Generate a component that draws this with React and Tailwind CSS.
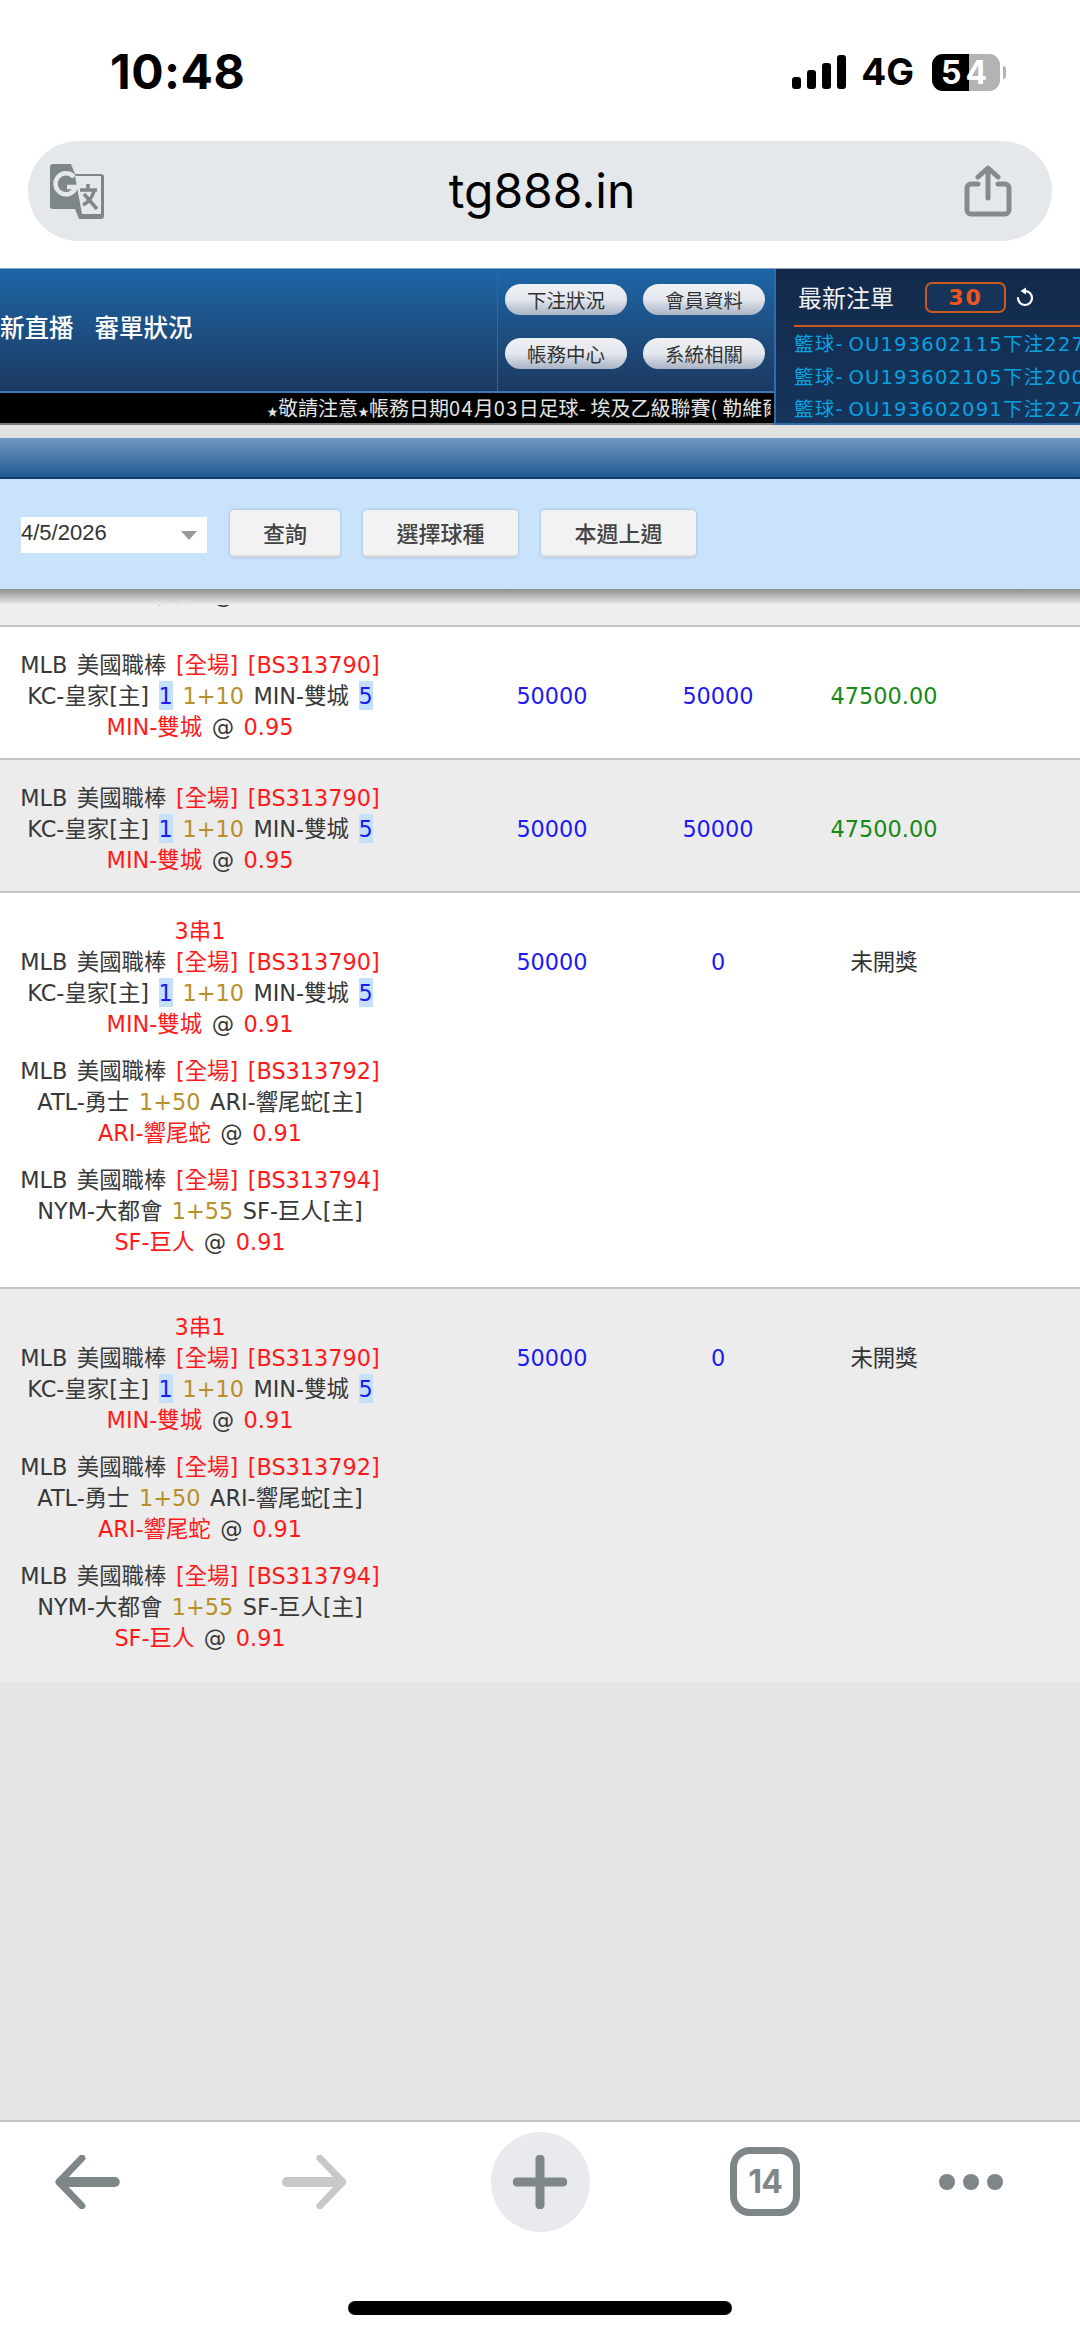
const bodyFont = "font-['DejaVu_Sans','Noto_Sans_CJK_TC',sans-serif]";

const leg1 = (odds) => ({
  league: "MLB 美國職棒",
  id: "[BS313790]",
  home: "KC-皇家[主]",
  homeScore: "1",
  hdp: "1+10",
  away: "MIN-雙城",
  awayScore: "5",
  pick: "MIN-雙城",
  odds,
});

const leg2 = {
  league: "MLB 美國職棒",
  id: "[BS313792]",
  home: "ATL-勇士",
  hdp: "1+50",
  away: "ARI-響尾蛇[主]",
  pick: "ARI-響尾蛇",
  odds: "0.91",
};

const leg3 = {
  league: "MLB 美國職棒",
  id: "[BS313794]",
  home: "NYM-大都會",
  hdp: "1+55",
  away: "SF-巨人[主]",
  pick: "SF-巨人",
  odds: "0.91",
};

const rows = [
  { legs: [leg1("0.95")], stake: "50000", valid: "50000", result: "47500.00", won: true, style: "h-[133px] border-b-2 border-[#c4c2c2] bg-white" },
  { legs: [leg1("0.95")], stake: "50000", valid: "50000", result: "47500.00", won: true, style: "h-[133px] border-b-2 border-[#c4c2c2] bg-[#ececed]" },
  { title: "3串1", legs: [leg1("0.91"), leg2, leg3], stake: "50000", valid: "0", result: "未開獎", style: "h-[396px] border-b-2 border-[#c4c2c2] bg-white" },
  { title: "3串1", legs: [leg1("0.91"), leg2, leg3], stake: "50000", valid: "0", result: "未開獎", style: "h-[393px] bg-[#ececed]" },
];

const latestBets = ["193602115下注227", "193602105下注200", "193602091下注227"];

const Score = ({ value }) => (
  <span className="inline-block h-[29px] bg-[#c5e0fb] text-[#1c1cf0]">{value}</span>
);

const Leg = ({ leg }) => (
  <div>
    <div>
      {leg.league} <span className="text-[#ff1a1a]">[全場] {leg.id}</span>
    </div>
    <div>
      {leg.home} {leg.homeScore && <><Score value={leg.homeScore} />{" "}</>}
      <span className="text-[#b8902a]">{leg.hdp}</span> {leg.away}
      {leg.awayScore && <>{" "}<Score value={leg.awayScore} /></>}
    </div>
    <div>
      <span className="text-[#ff1a1a]">{leg.pick}</span> @ <span className="text-[#ff1a1a]">{leg.odds}</span>
    </div>
  </div>
);

const BetRow = ({ row }) => (
  <div className={`flex shrink-0 ${row.style} text-[22.4px] leading-[31px] [word-spacing:2.4px]`}>
    <div className="flex w-[400px] shrink-0 flex-col gap-[16px] pt-[23px] text-center text-[#383838]">
      {row.title ? (
        <>
          <div>
            <div className="text-[#ff1a1a]">{row.title}</div>
            <Leg leg={row.legs[0]} />
          </div>
          {row.legs.slice(1).map((leg) => (
            <Leg key={leg.id} leg={leg} />
          ))}
        </>
      ) : (
        <Leg leg={row.legs[0]} />
      )}
    </div>
    <div className="ml-[69px] flex pt-[54px] text-center">
      <div className="w-[166px] text-[#1c1cf0]">{row.stake}</div>
      <div className="w-[166px] text-[#1c1cf0]">{row.valid}</div>
      <div className={`w-[166px] ${row.won ? "text-[#178a17]" : "text-[#333]"}`}>{row.result}</div>
    </div>
  </div>
);

const StatusBar = () => (
  <div className="flex h-[141px] shrink-0 items-start justify-between bg-white pl-[110px] pr-[74px] pt-[50px] font-['Inter',sans-serif] text-black">
    <div className="text-[48px] font-bold leading-[44px] tracking-[0.5px]">10:48</div>
    <div className="flex items-center pt-[3px]">
      <svg width="54" height="34" viewBox="0 0 54 34" fill="#000">
        <rect x="0" y="22" width="9" height="12" rx="3" />
        <rect x="15" y="15" width="9" height="19" rx="3" />
        <rect x="30" y="8" width="9" height="26" rx="3" />
        <rect x="45" y="0" width="9" height="34" rx="3" />
      </svg>
      <div className="ml-[15px] text-[37px] font-bold leading-[38px]">4G</div>
      <div className="relative ml-[18px] flex h-[37px] w-[68px] overflow-hidden rounded-[11px] bg-[#b3b3b3]">
        <div className="h-full w-[37px] bg-black" />
        <div className="absolute inset-0 text-center text-[32px] font-bold leading-[37px] tracking-[4px] text-white">54</div>
      </div>
      <div className="ml-[3px] h-[13px] w-[3px] rounded-r-full bg-[#b3b3b3]" />
    </div>
  </div>
);

const TranslateIcon = () => (
  <svg width="55" height="55" viewBox="0 0 55 55">
    <path d="M3 0h18l4 10h26a3 3 0 0 1 3 3v39a3 3 0 0 1-3 3H29l-4-10H3a3 3 0 0 1-3-3V3a3 3 0 0 1 3-3z" fill="#7f8689" />
    <path d="M25 12h26v38H32z" fill="#e5e8eb" />
    <path d="M30 26h17M38 20v6M44 27c-2 7-7 12-11 14M34 30l13 15" stroke="#7f8689" strokeWidth="3.5" fill="none" />
    <path d="M24 13a10.5 10.5 0 1 0 2 10H17" stroke="#e5e8eb" strokeWidth="4.5" fill="none" />
  </svg>
);

const ShareIcon = () => (
  <svg width="48" height="52" viewBox="0 0 48 52" fill="none" stroke="#848a8f" strokeWidth="5" strokeLinecap="round" strokeLinejoin="round">
    <path d="M14 19H7a4 4 0 0 0-4 4v22a4 4 0 0 0 4 4h34a4 4 0 0 0 4-4V23a4 4 0 0 0-4-4h-7" />
    <path d="M24 33V4M14 12l10-9 10 9" />
  </svg>
);

const UrlBar = () => (
  <div className="shrink-0 bg-white px-[28px] pb-[27px]">
    <div className="flex h-[100px] items-center justify-between rounded-[50px] bg-[#e5e8eb] pl-[22px] pr-[40px]">
      <TranslateIcon />
      <div className="ml-[15px] font-['Inter',sans-serif] text-[48px] leading-[56px] text-black">tg888.in</div>
      <ShareIcon />
    </div>
  </div>
);

const PillButton = ({ children }) => (
  <div className="flex h-[31px] w-[122px] items-center justify-center rounded-full bg-gradient-to-b from-[#eef1f5] via-[#e4e8ee] to-[#a9b3c4] text-[19.5px] text-[#333]">
    {children}
  </div>
);

const RefreshIcon = () => (
  <svg width="18" height="20" viewBox="0 0 18 20" fill="none" className="ml-[10px]">
    <path d="M2 11a7 7 0 1 0 7-7" stroke="#fff" strokeWidth="2.2" strokeLinecap="round" />
    <path d="M4.5 4 10 .5v7z" fill="#fff" />
  </svg>
);

const TopPanel = () => (
  <div className="flex h-[170px] shrink-0 border-t border-[#8aa6c2] bg-[#e1e1e1] pb-[13px] font-['Noto_Sans_CJK_TC',sans-serif]">
    <div className="flex w-[774px] shrink-0 flex-col">
      <div className="flex h-[125px] border-b-2 border-[#3f78b4] bg-gradient-to-b from-[#1c66a6] to-[#1b3a62]">
        <div className="flex w-[497px] shrink-0 items-center whitespace-nowrap pb-[6px] text-[24.5px] font-medium text-white">
          <span>新直播</span>
          <span className="ml-[21px]">審單狀況</span>
        </div>
        <div className="grid grid-cols-[122px_122px] content-start gap-x-[16px] gap-y-[23px] border-l border-[#33689c] pl-[7px] pt-[15px]">
          <PillButton>下注狀況</PillButton>
          <PillButton>會員資料</PillButton>
          <PillButton>帳務中心</PillButton>
          <PillButton>系統相關</PillButton>
        </div>
      </div>
      <div className="h-[32px] border-b-2 border-[#777] bg-black pl-[267px] pr-[3px] text-[20px] leading-[29px] text-[#e4e4e4]">
        <div className="w-[504px] overflow-hidden whitespace-nowrap">
          <span className="text-[11px]">★</span>敬請注意<span className="text-[11px]">★</span>帳務日期<span className="tracking-[1.3px]">04</span>月<span className="tracking-[1.3px]">03</span>日足球<span className="tracking-[5px]">-</span>埃及乙級聯賽<span className="tracking-[5px]">(</span>勒維爾
        </div>
      </div>
    </div>
    <div className="h-[156px] flex-1 overflow-hidden border-b-2 border-l-2 border-[#2f6cab] bg-gradient-to-b from-[#12294a] to-[#16355c]">
      <div className="flex h-[56px] items-center pl-[22px]">
        <div className="text-[24px] leading-[30px] text-[#f2f2f2]">最新注單</div>
        <div className="ml-[31px] flex h-[31px] w-[81px] items-center justify-center rounded-[7px] border-2 border-[#c9591d] bg-[#16345a] font-['DejaVu_Sans',sans-serif] text-[22px] font-bold tracking-[2px] text-[#f0561c]">
          30
        </div>
        <RefreshIcon />
      </div>
      <div className="ml-[18px] border-t-2 border-[#c9591d] pt-[2px] font-['DejaVu_Sans','Noto_Sans_CJK_TC',sans-serif] text-[19.5px] leading-[32.5px] tracking-[1.2px] text-[#06a3e0]">
        {latestBets.map((bet) => (
          <div key={bet} className="whitespace-nowrap">
            籃球<span className="tracking-[6px]">-</span>OU{bet}
          </div>
        ))}
      </div>
    </div>
  </div>
);

const ActionButton = ({ width, children }) => (
  <div className={`flex h-[47px] ${width} items-center justify-center rounded-[4px] border-b-2 border-[#dcdcdc] bg-[#f2f2f2] font-['Noto_Sans_CJK_TC',sans-serif] text-[22px] font-medium text-[#444] shadow-[0_0_3px_rgba(120,140,160,0.6)]`}>
    {children}
  </div>
);

const FilterBar = () => (
  <div className="relative z-10 flex h-[110px] shrink-0 items-start bg-[#c9e3fd] pl-[21px] pt-[31px]">
    <div className="mt-[7px] flex h-[36px] w-[186px] items-start justify-between bg-white pr-[10px] pt-[2px] font-['Liberation_Sans',sans-serif] text-[22px] leading-[27px] text-[#333]">
      <span>4/5/2026</span>
      <span className="mt-[12px] h-0 w-0 border-x-[8px] border-t-[9px] border-x-transparent border-t-[#999]" />
    </div>
    <div className="ml-[23px] flex gap-[23px]">
      <ActionButton width="w-[110px]">查詢</ActionButton>
      <ActionButton width="w-[155px]">選擇球種</ActionButton>
      <ActionButton width="w-[155px]">本週上週</ActionButton>
    </div>
  </div>
);

const Toolbar = () => (
  <div className="relative h-[217px] shrink-0 border-t-2 border-[#c4c4c4] bg-white">
    <div className="flex h-[119px] items-center justify-between pl-[55px] pr-[77px]">
      <svg width="65" height="54" viewBox="0 0 65 54" fill="none" stroke="#7f8689" strokeLinecap="round" strokeLinejoin="round">
        <path d="M27 3 4 27l23 24" strokeWidth="7" />
        <path d="M6 27h54" strokeWidth="10" />
      </svg>
      <svg width="65" height="54" viewBox="0 0 65 54" fill="none" stroke="#c8c8c8" strokeLinecap="round" strokeLinejoin="round" className="ml-[162px]">
        <path d="m38 3 23 24-23 24" strokeWidth="7" />
        <path d="M59 27H5" strokeWidth="10" />
      </svg>
      <div className="ml-[144px] flex h-[100px] w-[100px] items-center justify-center rounded-full bg-[#e9eaee]">
        <svg width="54" height="54" viewBox="0 0 54 54" stroke="#7f8689" strokeWidth="9" strokeLinecap="round">
          <path d="M27 4v46M4 27h46" />
        </svg>
      </div>
      <div className="ml-[140px] flex h-[69px] w-[70px] items-center justify-center rounded-[20px] border-[7px] border-[#7f8689] font-['Inter',sans-serif] text-[32px] font-bold tracking-[-1px] text-[#7f8689]">
        14
      </div>
      <div className="ml-[139px] flex gap-[8px]">
        <div className="h-[16px] w-[16px] rounded-full bg-[#7f8689]" />
        <div className="h-[16px] w-[16px] rounded-full bg-[#7f8689]" />
        <div className="h-[16px] w-[16px] rounded-full bg-[#7f8689]" />
      </div>
    </div>
    <div className="absolute bottom-[22px] left-[348px] h-[14px] w-[384px] rounded-full bg-black" />
  </div>
);

export default function App() {
  return (
    <div className={`flex h-[2337px] w-[1080px] flex-col overflow-hidden bg-[#e5e5e5] ${bodyFont}`}>
      <StatusBar />
      <UrlBar />
      <TopPanel />
      <div className="h-[41px] shrink-0 border-b-2 border-[#123a66] bg-gradient-to-b from-[#7199c2] to-[#1f5a94]" />
      <FilterBar />
      <div className="relative h-[38px] shrink-0 overflow-hidden border-b-2 border-[#c4c2c2] bg-[#efefef]">
        <div className="absolute left-0 top-[-9px] w-[400px] text-center text-[22.4px] leading-[31px] text-[#383838] [word-spacing:2.4px]">
          <span className="text-[#ff1a1a]">MIN-雙城</span> @ <span className="text-[#ff1a1a]">0.95</span>
        </div>
        <div className="absolute inset-x-0 top-0 h-[16px] bg-gradient-to-b from-[#8f8f8f] to-[#efefef]" />
      </div>
      {rows.map((row, i) => (
        <BetRow key={i} row={row} />
      ))}
      <div className="flex-1" />
      <Toolbar />
    </div>
  );
}
